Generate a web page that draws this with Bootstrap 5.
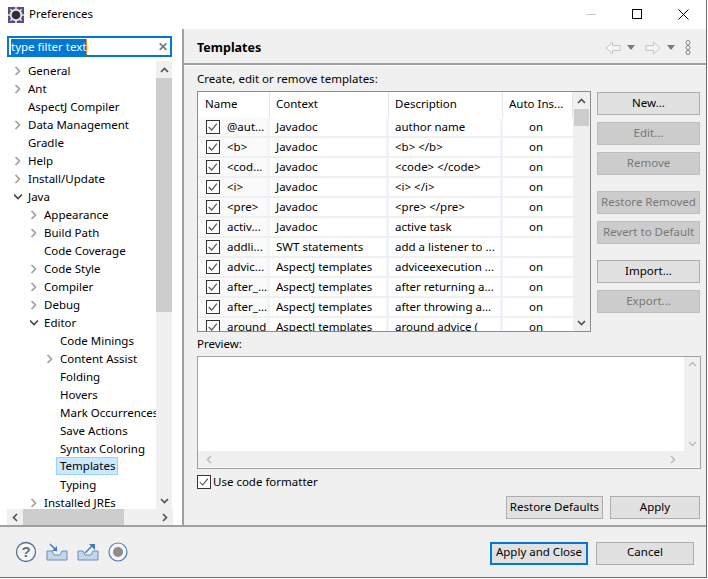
<!DOCTYPE html>
<html lang="en"><head><meta charset="utf-8"><title>Preferences</title>
<link rel="stylesheet" href="https://cdn.jsdelivr.net/npm/bootstrap@5.3.0/dist/css/bootstrap.min.css">
<style>
html,body{width:708px;height:579px;overflow:hidden;background:#fff}
body{font:11.5px/16px "Noto Sans","Open Sans",sans-serif;color:#000}
.win{width:707px;height:578px;border-right:1px solid #6e6e6e;border-bottom:1px solid #6e6e6e}
.tbar{height:29px;background:#fff}
.tbar .ttl{margin-left:8px}
.tname{margin-left:5px;font-size:11.5px;padding-bottom:1px}
.wc{width:46px;height:29px}
.mainrow{height:496px}
.left{width:184px;background:#fff;border-right:2px solid #a0a0a0;padding:7px 10px 0 7px;flex:none}
.filter{height:22px;border:2px solid #0078d7;padding:0 0 0 2px}
.filter span.sel{background:#0078d7;color:#fff;line-height:16px;border-right:1px solid #e8802a}
.filter .cl{margin-left:auto;margin-right:2px;color:#777;font-weight:700}
.treewrap{height:448px;margin-top:4px}
.tree{width:150px;overflow:hidden}
.trow{height:18px;line-height:17px;white-space:nowrap;display:flex;align-items:center}
.trow.l0{padding-left:7px}.trow.l1{padding-left:23px}.trow.l2{padding-left:39px}
.arw{width:14px;height:18px;flex:none}
.sel2{background:#cce8ff;border:1px solid #99d1ff;padding:0 2px 0 3px;margin-left:-4px;height:18px;line-height:15px}
.vs{width:16px;background:#f0f0f0;flex:none}
.vs .b{height:17px;display:flex;align-items:center;justify-content:center}
.thumb{background:#cdcdcd}
.hs{height:16px;background:#f0f0f0;width:166px}
.hs .b{width:16px;display:flex;align-items:center;justify-content:center;flex:none}
.right{flex:1;background:#f0f0f0;min-width:0}
.rh{height:36px;border-bottom:2px solid #a0a0a0;padding:3px 15px 0 13px}
.rh b{font-size:12.5px;font-weight:700}
.rb{border-top:1px solid #fff;padding:5px 5px 0 13px;height:460px}
.tbl{width:394px;height:241px;border:1px solid #8c8c8c;background:#fff;margin-top:4px;overflow:hidden}
.cols{width:375px;overflow:hidden}
.hdr{height:26px;flex:none}
.hc{border-right:1px solid #e5e5e5;padding:3px 0 0 6px;height:25px;flex:none;line-height:18px}
.hc.c1{padding-left:7px}
.c1{width:72px}.c2{width:119px}.c3{width:114px}.c4{width:70px}
.tr{height:20px;flex:none;border-bottom:2px solid #f0f0f0}
.td{height:18px;line-height:18px;padding-left:6px;border-right:3px solid #f0f4fa;white-space:nowrap;overflow:hidden;flex:none}
.td.c1{background:#fafafa;padding-left:8px;display:flex;align-items:center;gap:7px}
.td.c4{text-align:center;padding:0 4px 0 0;border-right:0}
.ck{width:14px;height:14px;border:1px solid #333;background:#fff;flex:none;display:block}
.sb2{width:17px;background:#f0f0f0;flex:none}
.bc{width:103px;margin-left:6px;flex:none;padding-top:5px}
.bt{width:103px;height:23px;border:1px solid #adadad;background:#e1e1e1;border-radius:0;font-size:11.5px;line-height:16px;padding:0 0 2px;color:#000;display:block}
.bt:disabled,.bt.disabled{background:#ccc;border-color:#bfbfbf;color:#787878;opacity:1}
.m7{margin-top:7px}.m16{margin-top:16px}
.pvlab{margin-top:4px}
.pv{width:504px;height:113px;border:1px solid #a0a0a0;background:#fff;margin-top:4px;padding-bottom:1px}
.pvv{width:16px;background:#f0f0f0;flex:none}
.pvh{height:16px;background:#f0f0f0;flex:none;padding:0 8px}
.pvr{margin-right:16px}
.fmt{margin-top:5px;height:16px}
.fmt .ck{margin-right:2px}
.acts{margin-top:6px;margin-right:1px;gap:7px}
.foot{height:52px;background:#f0f0f0;border-top:2px solid #a0a0a0;padding:0 12px 0 15px}
.foot .bt{width:98px}
.bbtns{gap:8px;padding-top:2px}
.bdef{border:2px solid #0078d7}
.ficons{gap:9px}
.w97{width:97px}.w90{width:90px}
</style></head><body>
<div class="win d-flex flex-column">
 <div class="tbar d-flex align-items-center">
  <svg class="ttl" width="16" height="16" viewBox="0 0 16 16"><rect width="16" height="16" fill="#5c4a8a"/><circle cx="8" cy="8" r="6.200" fill="#e4e4e4"/><circle cx="8" cy="8" r="4.300" fill="#2d2d36"/><path d="M8 0v3M8 13v3M0 8h3M13 8h3M2.300 2.300l2 2M11.700 11.700l2 2M13.700 2.300l-2 2M4.300 11.700l-2 2" stroke="#e4e4e4" stroke-width="1.600"/></svg>
  <span class="tname">Preferences</span>
  <div class="ms-auto d-flex">
   <div class="wc d-flex align-items-center justify-content-center"><svg width="11" height="11"><path d="M0 5.500h10" stroke="#c8c8c8"/></svg></div>
   <div class="wc d-flex align-items-center justify-content-center"><svg width="11" height="11"><rect x=".5" y=".5" width="9" height="9" fill="none" stroke="#000"/></svg></div>
   <div class="wc d-flex align-items-center justify-content-center"><svg width="11" height="11"><path d="M.5.5l10 10M10.500.5l-10 10" stroke="#000"/></svg></div>
  </div>
 </div>
 <div class="mainrow d-flex">
  <div class="left d-flex flex-column">
   <div class="filter d-flex align-items-center"><span class="sel">type filter text</span><span class="cl">✕</span></div>
   <div class="treewrap d-flex">
    <div class="tree" id="tree"></div>
    <div class="vs d-flex flex-column">
     <div class="b"><svg width="9" height="6"><path d="M1 5l3.500-3.500L8 5" fill="none" stroke="#505050" stroke-width="1.600"/></svg></div>
     <div class="thumb" style="height:234px"></div>
     <div class="flex-grow-1"></div>
     <div class="b"><svg width="9" height="6"><path d="M1 1l3.500 3.500L8 1" fill="none" stroke="#505050" stroke-width="1.600"/></svg></div>
    </div>
   </div>
   <div class="hs d-flex">
    <div class="b"><svg width="6" height="9"><path d="M5 1L1.500 4.500 5 8" fill="none" stroke="#505050" stroke-width="1.600"/></svg></div>
    <div class="thumb" style="width:101px"></div>
    <div class="flex-grow-1"></div>
    <div class="b"><svg width="6" height="9"><path d="M1 1l3.500 3.500L1 8" fill="none" stroke="#505050" stroke-width="1.600"/></svg></div>
   </div>
  </div>
  <div class="right d-flex flex-column">
   <div class="rh d-flex align-items-center">
    <b>Templates</b>
    <div class="ms-auto d-flex align-items-center" style="gap:6px">
     <svg width="16" height="14" viewBox="0 0 16 14"><path d="M7.500 1L1 7l6.500 6V9.500H15v-5H7.500z" fill="#f4f4f4" stroke="#c4c4c4"/></svg>
     <svg width="8" height="5"><path d="M0 0h8L4 5z" fill="#7a7a7a"/></svg>
     <svg class="ms-1" width="16" height="14" viewBox="0 0 16 14"><path d="M8.500 1L15 7l-6.500 6V9.500H1v-5h7.500z" fill="#f4f4f4" stroke="#c4c4c4"/></svg>
     <svg width="8" height="5"><path d="M0 0h8L4 5z" fill="#7a7a7a"/></svg>
     <svg class="ms-1" width="6" height="15" viewBox="0 0 6 15"><circle cx="3" cy="2.500" r="2" fill="#fff" stroke="#7a7a7a"/><circle cx="3" cy="7.500" r="2" fill="#fff" stroke="#7a7a7a"/><circle cx="3" cy="12.500" r="2" fill="#fff" stroke="#7a7a7a"/></svg>
    </div>
   </div>
   <div class="rb">
    <div>Create, edit or remove templates:</div>
    <div class="d-flex">
     <div class="tbl d-flex">
      <div class="cols d-flex flex-column" id="cols"></div>
      <div class="sb2 d-flex flex-column">
       <div class="vs" style="width:17px"><div class="b"><svg width="9" height="6"><path d="M1 5l3.500-3.500L8 5" fill="none" stroke="#505050" stroke-width="1.600"/></svg></div></div>
       <div class="thumb" style="height:17px;width:15px;margin-left:1px"></div>
       <div class="flex-grow-1"></div>
       <div class="vs" style="width:17px"><div class="b"><svg width="9" height="6"><path d="M1 1l3.500 3.500L8 1" fill="none" stroke="#505050" stroke-width="1.600"/></svg></div></div>
      </div>
     </div>
     <div class="bc">
      <button class="btn bt">New...</button>
      <button class="btn bt m7" disabled>Edit...</button>
      <button class="btn bt m7" disabled>Remove</button>
      <button class="btn bt m16" disabled>Restore Removed</button>
      <button class="btn bt m7" disabled>Revert to Default</button>
      <button class="btn bt m16">Import...</button>
      <button class="btn bt m7" disabled>Export...</button>
     </div>
    </div>
    <div class="pvlab">Preview:</div>
    <div class="pv d-flex flex-column">
     <div class="d-flex flex-grow-1">
      <div class="flex-grow-1"></div>
      <div class="pvv d-flex flex-column justify-content-between py-1 align-items-center"><svg width="9" height="6"><path d="M1 5l3.500-3.500L8 5" fill="none" stroke="#bcbcbc" stroke-width="1.500"/></svg><svg width="9" height="6"><path d="M1 1l3.500 3.500L8 1" fill="none" stroke="#bcbcbc" stroke-width="1.500"/></svg></div>
     </div>
     <div class="pvh d-flex justify-content-between align-items-center"><svg width="6" height="9"><path d="M5 1L1.500 4.500 5 8" fill="none" stroke="#bcbcbc" stroke-width="1.500"/></svg><svg class="pvr" width="6" height="9"><path d="M1 1l3.500 3.500L1 8" fill="none" stroke="#bcbcbc" stroke-width="1.500"/></svg></div>
    </div>
    <div class="fmt d-flex align-items-center"><svg class="ck" viewBox="0 0 14 14"><path d="M2 7l3.500 3.500 6-7.500" fill="none" stroke="#444" stroke-width="1.200"/></svg><span>Use code formatter</span></div>
    <div class="acts d-flex justify-content-end">
     <button class="btn bt w97">Restore Defaults</button>
     <button class="btn bt w90">Apply</button>
    </div>
   </div>
  </div>
 </div>
 <div class="foot d-flex align-items-center">
  <div class="d-flex align-items-center ficons">
   <svg width="22" height="22" viewBox="0 0 22 22"><circle cx="11" cy="11" r="9.500" fill="#f6f6f6" stroke="#56708f" stroke-width="1.300"/><text x="11" y="16" text-anchor="middle" font-family="Liberation Sans" font-weight="700" font-size="15" fill="#56708f">?</text></svg>
   <svg width="22" height="20" viewBox="0 0 22 20"><path d="M1 9h5l2 4h6l2-4h5v9H1z" fill="#c4d7ea" stroke="#6a8fb5"/><path d="M4 2l7 7" stroke="#3f7cbd" stroke-width="1.500"/><path d="M6 9h5V4z" fill="#3f7cbd"/></svg>
   <svg width="22" height="20" viewBox="0 0 22 20"><path d="M1 9h5l2 4h6l2-4h5v9H1z" fill="#c4d7ea" stroke="#6a8fb5"/><path d="M8 11l8-8" stroke="#3f7cbd" stroke-width="1.500"/><path d="M12 2h6v6z" fill="#3f7cbd"/></svg>
   <svg width="20" height="20" viewBox="0 0 20 20"><circle cx="10" cy="10" r="9" fill="#f6f6f6" stroke="#4c7fae" stroke-width="1.200"/><circle cx="10" cy="10" r="5" fill="#8c8c8c"/></svg>
  </div>
  <div class="ms-auto d-flex bbtns">
   <button class="btn bt bdef">Apply and Close</button>
   <button class="btn bt">Cancel</button>
  </div>
 </div>
</div>
<script>
const R='<svg class="arw" viewBox="0 0 14 18"><path d="M1.500 6l4 4-4 4" fill="none" stroke="#a0a0a0" stroke-width="1.700"/></svg>';
const D='<svg class="arw" viewBox="0 0 14 18"><path d="M0 7.500l4 4 4-4" fill="none" stroke="#444" stroke-width="1.600"/></svg>';
const E='<span class="arw"></span>';
const T=[[0,R,'General'],[0,R,'Ant'],[0,E,'AspectJ Compiler'],[0,R,'Data Management'],[0,E,'Gradle'],[0,R,'Help'],[0,R,'Install/Update'],[0,D,'Java'],[1,R,'Appearance'],[1,R,'Build Path'],[1,E,'Code Coverage'],[1,R,'Code Style'],[1,R,'Compiler'],[1,R,'Debug'],[1,D,'Editor'],[2,E,'Code Minings'],[2,R,'Content Assist'],[2,E,'Folding'],[2,E,'Hovers'],[2,E,'Mark Occurrences'],[2,E,'Save Actions'],[2,E,'Syntax Coloring'],[2,E,'Templates',1],[2,E,'Typing'],[1,R,'Installed JREs']];
document.getElementById('tree').innerHTML=T.map(t=>`<div class="trow l${t[0]}">${t[1]}<span class="${t[3]?'sel2':''}">${t[2]}</span></div>`).join('');
const esc=s=>s.replace(/</g,'&lt;').replace(/>/g,'&gt;');
const Rw=[['@aut...','Javadoc','author name','on'],['<b>','Javadoc','<b> </b>','on'],['<cod...','Javadoc','<code> </code>','on'],['<i>','Javadoc','<i> </i>','on'],['<pre>','Javadoc','<pre> </pre>','on'],['activ...','Javadoc','active task','on'],['addli...','SWT statements','add a listener to ...',''],['advic...','AspectJ templates','adviceexecution ...','on'],['after_...','AspectJ templates','after returning a...','on'],['after_...','AspectJ templates','after throwing a...','on'],['around','AspectJ templates','around advice (','on']];
const ck='<svg class="ck" viewBox="0 0 14 14"><path d="M2 7l3.500 3.500 6-7.500" fill="none" stroke="#555" stroke-width="1.400"/></svg>';
document.getElementById('cols').innerHTML=`<div class="hdr d-flex"><div class="hc c1">Name</div><div class="hc c2">Context</div><div class="hc c3">Description</div><div class="hc c4">Auto Ins...</div></div>`+Rw.map(r=>`<div class="tr d-flex"><div class="td c1">${ck}<span>${esc(r[0])}</span></div><div class="td c2">${esc(r[1])}</div><div class="td c3">${esc(r[2])}</div><div class="td c4">${r[3]}</div></div>`).join('');
</script>
<script src="https://cdn.jsdelivr.net/npm/bootstrap@5.3.0/dist/js/bootstrap.bundle.min.js"></script>
</body></html>
